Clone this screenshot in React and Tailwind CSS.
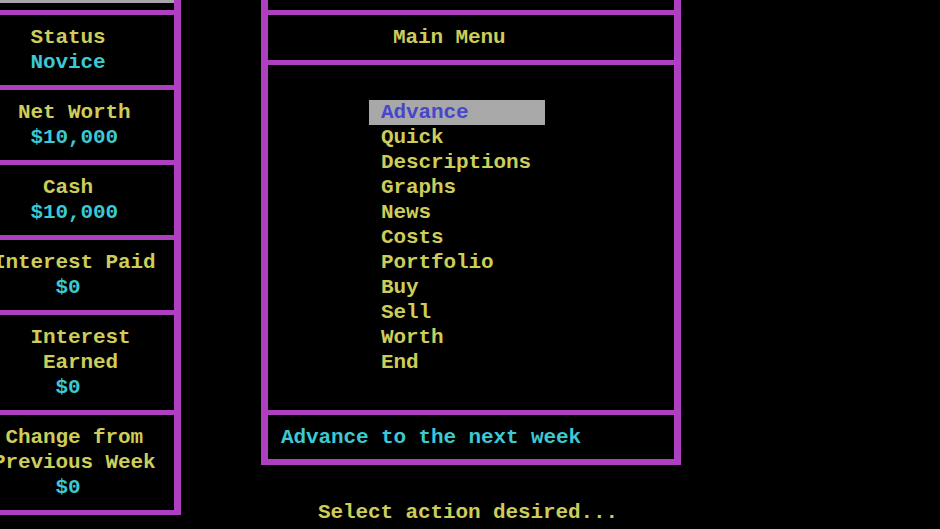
// column offsets in 12.5px character cells
const PANEL = [
  { lines: [["Status", "y", "pl-[37.5px]"], ["Novice", "c", "pl-[37.5px]"]] },
  { lines: [["Net Worth", "y", "pl-[25px]"], ["$10,000", "c", "pl-[37.5px]"]] },
  { lines: [["Cash", "y", "pl-[50px]"], ["$10,000", "c", "pl-[37.5px]"]] },
  { lines: [["Interest Paid", "y", "pl-0"], ["$0", "c", "pl-[62.5px]"]] },
  { lines: [["Interest", "y", "pl-[37.5px]"], ["Earned", "y", "pl-[50px]"], ["$0", "c", "pl-[62.5px]"]] },
  { lines: [["Change from", "y", "pl-[12.5px]"], ["Previous Week", "y", "pl-0"], ["$0", "c", "pl-[62.5px]"]] },
];

const MENU = [
  "Advance",
  "Quick",
  "Descriptions",
  "Graphs",
  "News",
  "Costs",
  "Portfolio",
  "Buy",
  "Sell",
  "Worth",
  "End",
];

function Line({ text, tone, pad = "" }) {
  return (
    <div
      className={`h-[25px] leading-[25px] whitespace-nowrap ${pad} ${
        tone === "c" ? "text-[#3cc8d4]" : "text-[#cdcd5a]"
      }`}
    >
      {text}
    </div>
  );
}

export default function App() {
  const selected = 0;

  return (
    <div
      className="w-[940px] h-[529px] bg-black overflow-hidden text-[21px] font-bold tracking-[-0.1px]"
      style={{ fontFamily: '"Liberation Mono", "DejaVu Sans Mono", monospace' }}
    >
      <div className="flex items-start">
        {/* stats column */}
        <div className="-ml-[7px] w-[188px] shrink-0 border-r-[7px] border-b-[5px] border-[#ad3fc0]">
          <div className="h-[3px] bg-[#a6a6a6]" />
          <div className="h-[7px]" />
          <div className="border-t-[5px] border-[#ad3fc0] divide-y-[5px] divide-[#ad3fc0]">
            {PANEL.map((s, i) => (
              <div key={i} className="py-[10px]">
                {s.lines.map(([t, tone, pad], j) => (
                  <Line key={j} text={t} tone={tone} pad={pad} />
                ))}
              </div>
            ))}
          </div>
        </div>

        {/* menu window */}
        <div className="ml-[80px] flex flex-col">
          <div className="w-[420px] border-x-[7px] border-b-[6px] border-[#ad3fc0]">
            <div className="h-[10px]" />
            <div className="border-t-[5px] border-[#ad3fc0] divide-y-[5px] divide-[#ad3fc0]">
              <div className="pt-[10px] pb-[10px]">
                <Line text="Main Menu" tone="y" pad="pl-[125px]" />
              </div>
              <div className="pt-[35px] pb-[35px]">
                {MENU.map((item, i) =>
                  i === selected ? (
                    <div key={item} className="ml-[101px] w-[176px] pl-[12px] h-[25px] leading-[25px] bg-[#a8a8a8] text-[#4646cc]">
                      {item}
                    </div>
                  ) : (
                    <Line key={item} text={item} tone="y" pad="pl-[113px]" />
                  )
                )}
              </div>
              <div className="pt-[10px] pb-[9px]">
                <Line text="Advance to the next week" tone="c" pad="pl-[13px]" />
              </div>
            </div>
          </div>
          <div className="mt-[35px]">
            <Line text="Select action desired..." tone="y" pad="pl-[57px]" />
          </div>
        </div>
      </div>
    </div>
  );
}
